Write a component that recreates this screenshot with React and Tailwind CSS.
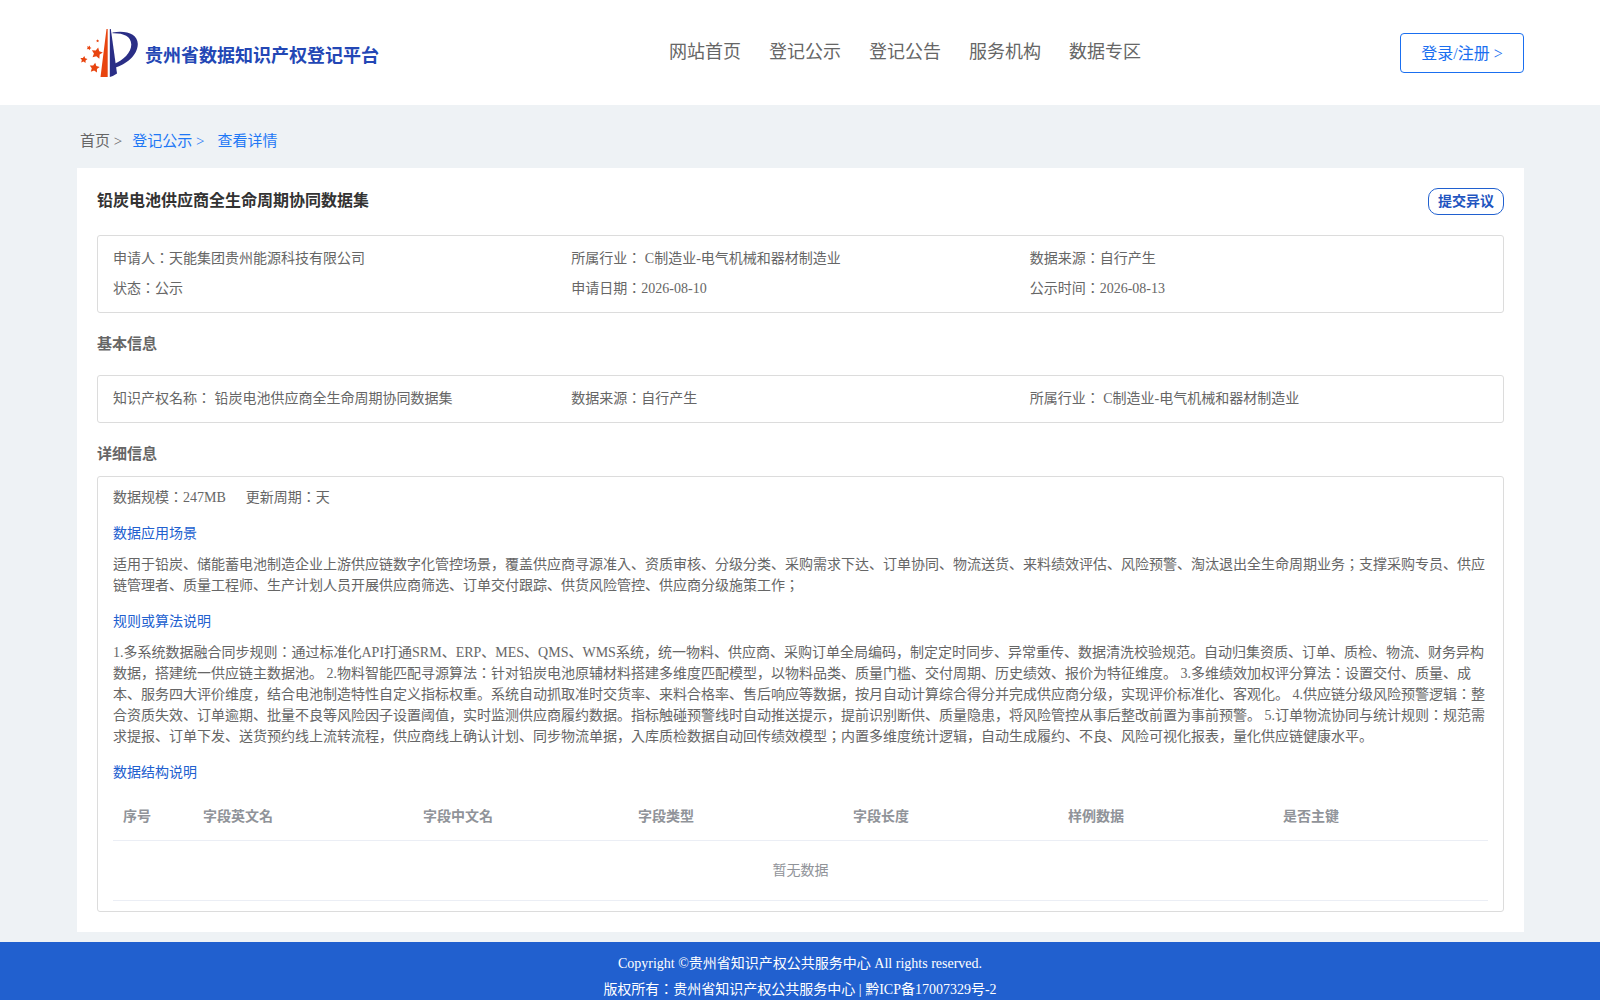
const navItems = ['网站首页', '登记公示', '登记公告', '服务机构', '数据专区'];

const summary = [
  '申请人：天能集团贵州能源科技有限公司',
  '所属行业： C制造业-电气机械和器材制造业',
  '数据来源：自行产生',
  '状态：公示',
  '申请日期：2026-08-10',
  '公示时间：2026-08-13',
];

const basics = [
  '知识产权名称： 铅炭电池供应商全生命周期协同数据集',
  '数据来源：自行产生',
  '所属行业： C制造业-电气机械和器材制造业',
];

const columns = ['序号', '字段英文名', '字段中文名', '字段类型', '字段长度', '样例数据', '是否主键'];

const scenario =
  '适用于铅炭、储能蓄电池制造企业上游供应链数字化管控场景，覆盖供应商寻源准入、资质审核、分级分类、采购需求下达、订单协同、物流送货、来料绩效评估、风险预警、淘汰退出全生命周期业务；支撑采购专员、供应链管理者、质量工程师、生产计划人员开展供应商筛选、订单交付跟踪、供货风险管控、供应商分级施策工作；';

const rules =
  '1.多系统数据融合同步规则：通过标准化API打通SRM、ERP、MES、QMS、WMS系统，统一物料、供应商、采购订单全局编码，制定定时同步、异常重传、数据清洗校验规范。自动归集资质、订单、质检、物流、财务异构数据，搭建统一供应链主数据池。 2.物料智能匹配寻源算法：针对铅炭电池原辅材料搭建多维度匹配模型，以物料品类、质量门槛、交付周期、历史绩效、报价为特征维度。 3.多维绩效加权评分算法：设置交付、质量、成本、服务四大评价维度，结合电池制造特性自定义指标权重。系统自动抓取准时交货率、来料合格率、售后响应等数据，按月自动计算综合得分并完成供应商分级，实现评价标准化、客观化。 4.供应链分级风险预警逻辑：整合资质失效、订单逾期、批量不良等风险因子设置阈值，实时监测供应商履约数据。指标触碰预警线时自动推送提示，提前识别断供、质量隐患，将风险管控从事后整改前置为事前预警。 5.订单物流协同与统计规则：规范需求提报、订单下发、送货预约线上流转流程，供应商线上确认计划、同步物流单据，入库质检数据自动回传绩效模型；内置多维度统计逻辑，自动生成履约、不良、风险可视化报表，量化供应链健康水平。';

const STAR = 'M0 -10 L3.2 -4 L10 -3 L5.2 1.8 L6.2 9 L0 5.8 L-6.2 9 L-5.2 1.8 L-10 -3 L-3.2 -4 Z';

function Logo() {
  return (
    <svg className="h-[50px] w-[58px]" viewBox="0 0 58 50" aria-hidden="true">
      <path fill="#e8440f" d="M26.5 1 H27.7 V49 H20.5 Z" />
      <path fill="#2a2e86" d="M29.8 1 H30.8 L37 45.5 Q33.5 48 29.8 49 Z" />
      <path
        fill="#2a2e86"
        d="M32.5 4.5 C46 2 57.8 6 57.8 16 C57.5 28 46 36 35 39.8 L34.5 35.8 C43 32 51.3 25 51.3 16.5 C51 8 43 5 32.5 5.3 Z"
      />
      <g fill="#e8440f">
        <path d={STAR} transform="translate(17 25) rotate(12) scale(.56)" />
        <path d={STAR} transform="translate(14.5 39.7) rotate(8) scale(.5)" />
        <path d={STAR} transform="translate(3.8 31.5) rotate(8) scale(.36)" />
        <path d={STAR} transform="translate(9 19.8) rotate(20) scale(.24)" />
        <path d={STAR} transform="translate(17.6 12.8) scale(.15)" />
      </g>
    </svg>
  );
}

function FieldBox({ items }) {
  return (
    <div className="grid grid-cols-3 rounded-[3px] border border-[#dcdcdc] px-[15px] py-2 leading-[30px]">
      {items.map((item) => (
        <div key={item}>{item}</div>
      ))}
    </div>
  );
}

export default function App() {
  return (
    <div className="min-h-screen bg-[#eef2f5] font-['Liberation_Serif','Noto_Sans_CJK_JP',serif] text-sm text-[#666]">
      <header className="flex h-[105px] items-center bg-white pr-[76px] pl-[77px]">
        <div className="flex flex-[20] items-center gap-[7px] pl-[3px]">
          <Logo />
          <span className="pt-1.5 text-lg font-bold text-[#2347b5]">贵州省数据知识产权登记平台</span>
        </div>
        <nav className="flex gap-7 pb-0.5 text-lg">
          {navItems.map((item) => (
            <a key={item} href="#">{item}</a>
          ))}
        </nav>
        <div className="flex flex-[13] justify-end">
          <button type="button" className="h-10 w-[124px] rounded-[4px] border border-[#1a6ff0] pt-0.5 text-base text-[#1a6ff0]">
            登录/注册 &gt;
          </button>
        </div>
      </header>

      <main className="pr-[76px] pb-[10px] pl-[77px]">
        <nav className="flex h-[63px] items-center pt-[10px] pl-[3px] text-[15px]">
          <a href="#">首页 &gt;</a>
          <a href="#" className="ml-[10px] text-[#1f78f5]">登记公示 &gt;</a>
          <a href="#" className="ml-[13px] text-[#1f78f5]">查看详情</a>
        </nav>

        <div className="bg-white p-5">
          <div className="mb-5 flex items-center justify-between">
            <h1 className="pb-0.5 text-base font-bold text-[#333]">铅炭电池供应商全生命周期协同数据集</h1>
            <button type="button" className="h-[27px] w-[76px] rounded-[10px] border border-[#2060cf] font-bold text-[#1f55c0]">
              提交异议
            </button>
          </div>

          <FieldBox items={summary} />

          <h2 className="pt-5 pb-5 text-[15px] leading-[22px] font-bold">基本信息</h2>
          <FieldBox items={basics} />

          <h2 className="pt-5 pb-[11px] text-[15px] leading-[22px] font-bold">详细信息</h2>
          <section className="rounded-[3px] border border-[#dcdcdc] px-[15px] py-[10px] leading-[21px]">
            <p className="flex gap-5">
              <span>数据规模：247MB</span>
              <span>更新周期：天</span>
            </p>
            <h3 className="mt-[15px] mb-[10px] text-[#2160cf]">数据应用场景</h3>
            <p>{scenario}</p>
            <h3 className="mt-[15px] mb-[10px] text-[#2160cf]">规则或算法说明</h3>
            <p>{rules}</p>
            <h3 className="mt-[15px] mb-[10px] text-[#2160cf]">数据结构说明</h3>
            <table className="w-full table-fixed text-[#909399]">
              <colgroup>
                <col className="w-20" />
                <col className="w-[16%]" />
                <col />
                <col />
                <col />
                <col />
                <col />
              </colgroup>
              <thead>
                <tr className="h-[47px] border-b border-[#ebeef5]">
                  {columns.map((name) => (
                    <th key={name} scope="col" className="px-[10px] text-left font-bold">{name}</th>
                  ))}
                </tr>
              </thead>
              <tbody>
                <tr className="h-[60px] border-b border-[#ebeef5]">
                  <td colSpan={7} className="text-center">暂无数据</td>
                </tr>
              </tbody>
            </table>
          </section>
        </div>
      </main>

      <footer className="bg-[#2160cf] pt-[9px] text-center leading-[26px] text-white">
        <p>Copyright ©贵州省知识产权公共服务中心 All rights reserved.</p>
        <p>版权所有：贵州省知识产权公共服务中心 | 黔ICP备17007329号-2</p>
      </footer>
    </div>
  );
}
